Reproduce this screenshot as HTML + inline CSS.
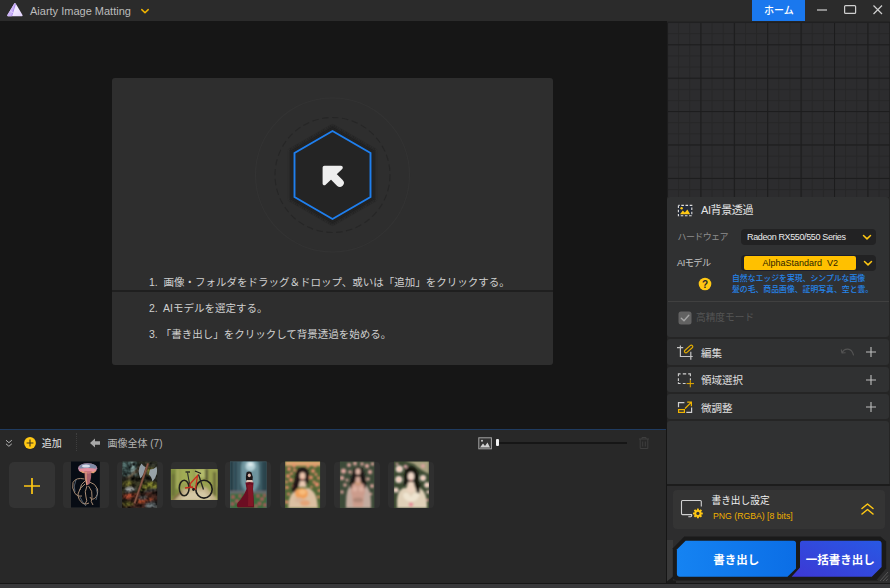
<!DOCTYPE html>
<html lang="ja">
<head>
<meta charset="utf-8">
<title>Aiarty Image Matting</title>
<style>
*{box-sizing:border-box;margin:0;padding:0}
html,body{width:890px;height:588px;overflow:hidden;background:#161616}
body{position:relative;font-family:"Liberation Sans","Noto Sans CJK JP",sans-serif;font-size:11px;color:#d8d8d8;-webkit-font-smoothing:antialiased}
.abs{position:absolute}
.t{position:absolute;white-space:nowrap;line-height:1}
/* title bar */
#titlebar{left:0;top:0;width:890px;height:21px;background:#2b2b2b}
#home{left:752px;top:0;width:53px;height:21px;background:#1a78ee}
/* center */
#drop{left:112px;top:78px;width:441px;height:286.600px;background:#2e2e2e;border-radius:3px}
#dropline{left:112px;top:290px;width:441px;height:2px;background:#1f1f1f}
/* bottom */
#bottom{left:0;top:429.300px;width:666px;height:154.200px;background:#282828;border-top:1.700px solid #1f3b60}
#status{left:0;top:583.500px;width:890px;height:4.500px;background:#38383a}
.thumb{position:absolute;top:461.500px;width:46px;height:46.300px;background:#2f2f2f;border-radius:4px}
/* right */
#right{left:667px;top:21px;width:223px;height:561px;background-color:#252525}
#grid{left:666.600px;top:21.500px;width:223.400px;height:175.500px}
.sec{position:absolute;left:667.300px;width:221.700px;background:#303132;border-radius:3px}
.dd{position:absolute;left:740.500px;width:135.500px;height:16.800px;background:#222223;border-radius:4px}
</style>
</head>
<body>
<!-- TITLE BAR -->
<div id="titlebar" class="abs"></div>
<svg class="abs" style="left:5px;top:0" width="20" height="20" viewBox="5 0 20 20">
  <defs><linearGradient id="lg1" x1="0" y1="0" x2="1" y2="1"><stop offset="0" stop-color="#d9c6fb"/><stop offset=".5" stop-color="#f3ebff"/><stop offset="1" stop-color="#e2d2fd"/></linearGradient></defs>
  <path d="M14.300 3.600 Q15 2.400 15.700 3.600 L22.500 15 Q23 16.200 21.800 16.200 L8.100 16.200 Q6.900 16.200 7.400 15 Z" fill="url(#lg1)"/>
  <path d="M14.300 3.600 Q14.800 2.800 15.200 2.900 L11.200 16.200 L8.100 16.200 Q6.900 16.200 7.400 15 Z" fill="#cbb2f8"/>
  <path d="M15.400 4 L11.600 16.200" stroke="#a884f0" stroke-width="1" fill="none"/>
  <path d="M10 10.500 L13.500 13.500" stroke="#e9dcff" stroke-width=".8" fill="none"/>
</svg>
<div class="t" id="apptitle" style="left:30px;top:5.600px;font-size:11px;color:#bcbcbc">Aiarty Image Matting</div>
<svg class="abs" style="left:140.300px;top:7.600px" width="10" height="7" viewBox="0 0 10 7"><path d="M1.800 1.600 L5 4.700 L8.200 1.600" fill="none" stroke="#f0b400" stroke-width="1.5" stroke-linecap="round" stroke-linejoin="round"/></svg>
<div id="home" class="abs"></div>
<div class="t" id="hometxt" style="left:764px;top:5.500px;font-size:10px;font-weight:500;color:#fff">ホーム</div>
<svg class="abs" style="left:812px;top:0" width="78" height="21" viewBox="0 0 78 21">
  <path d="M5 10 H15" stroke="#cfcfcf" stroke-width="1.2" fill="none"/>
  <rect x="32.6" y="5.6" width="11" height="7.8" rx="1" fill="none" stroke="#cfcfcf" stroke-width="1.2"/>
  <path d="M61.5 5.5 L70 14 M70 5.5 L61.5 14" stroke="#cfcfcf" stroke-width="1.2" fill="none"/>
</svg>

<!-- CENTER DROP PANEL -->
<div id="drop" class="abs"></div>
<div id="dropline" class="abs"></div>
<svg class="abs" style="left:232px;top:75px" width="200" height="200" viewBox="0 0 200 200">
  <defs><filter id="hb" x="-10%" y="-10%" width="120%" height="120%"><feGaussianBlur stdDeviation="1.100"/></filter></defs>
  <circle cx="100.500" cy="100" r="77" fill="none" stroke="#333" stroke-width="1.2"/>
  <circle cx="100.500" cy="100" r="57.500" fill="none" stroke="#262626" stroke-width="1.1" stroke-dasharray="6.500 3.500"/>
  <polygon points="100.500,50.500 143.500,75.300 143.500,124.700 100.500,149.500 57.500,124.700 57.500,75.300" fill="#202020" filter="url(#hb)"/>
  <polygon points="100.500,56 138.500,78 138.500,122 100.500,144 62.500,122 62.500,78" fill="#242424" stroke="#1f7fee" stroke-width="1.900" stroke-linejoin="miter"/>
  <polygon points="92.400,92.600 109,92.600 92.400,108.400" fill="#eeeeee" stroke="#eeeeee" stroke-width="3.600" stroke-linejoin="round"/>
  <path d="M99 99 L107.800 107.800" stroke="#eeeeee" stroke-width="8" stroke-linecap="round" fill="none"/>
</svg>
<div class="t" style="left:149px;top:276.500px;font-size:10.500px;color:#d0d0d0">1.&nbsp; 画像・フォルダをドラッグ＆ドロップ、或いは「追加」をクリックする。</div>
<div class="t" style="left:149px;top:302.500px;font-size:10.500px;color:#d0d0d0">2.&nbsp; AIモデルを選定する。</div>
<div class="t" style="left:149px;top:328.500px;font-size:10.500px;color:#d0d0d0">3. 「書き出し」をクリックして背景透過を始める。</div>

<!-- BOTTOM STRIP -->
<div id="bottom" class="abs"></div>
<div id="status" class="abs"></div>
<svg class="abs" style="left:4px;top:438px" width="10" height="10" viewBox="0 0 10 10"><path d="M2 2.200 L4.900 4.700 L7.800 2.200 M2 5.800 L4.900 8.300 L7.800 5.800" fill="none" stroke="#b4b4b4" stroke-width="1"/></svg>
<svg class="abs" style="left:22.600px;top:436.200px" width="14" height="14" viewBox="0 0 14 14"><circle cx="7" cy="7" r="5.900" fill="#ffc814"/><path d="M7 3.600 V10.400 M3.600 7 H10.400" stroke="#3a3320" stroke-width="1.100"/></svg>
<div class="t" style="left:41.800px;top:439px;font-size:10px;color:#e6e6e6">追加</div>
<div class="abs" style="left:76px;top:433px;width:0;height:18px;border-left:1px dotted #3e3e3e"></div>
<svg class="abs" style="left:89px;top:437px" width="12" height="12" viewBox="0 0 12 12"><path d="M1 6 L6 1.500 L6 4.300 L11 4.300 L11 7.700 L6 7.700 L6 10.500 Z" fill="#a8a8a8"/></svg>
<div class="t" style="left:107.500px;top:439px;font-size:10px;color:#b4b4b4">画像全体 (7)</div>
<svg class="abs" style="left:478px;top:436.500px" width="14" height="13" viewBox="0 0 14 13"><rect x=".8" y=".8" width="12.600" height="11" fill="#333" stroke="#a4a4a4" stroke-width="1"/><path d="M2 10.500 L5 6.500 L7 9 L9.500 5.500 L12 10.500 Z" fill="#d0d0d0"/><circle cx="4" cy="3.800" r="1" fill="#d0d0d0"/></svg>
<div class="abs" style="left:498px;top:442px;width:129px;height:2px;background:#161616"></div>
<div class="abs" style="left:496.400px;top:438.700px;width:2.600px;height:7.600px;background:#f0f0f0;border-radius:1px"></div>
<svg class="abs" style="left:638px;top:436px" width="12" height="14" viewBox="0 0 12 14"><path d="M1 3 H11 M4 3 V1.500 H8 V3 M2.200 3 V12.500 H9.800 V3 M4.700 5.500 V10.500 M7.300 5.500 V10.500" fill="none" stroke="#3e3e3e" stroke-width="1"/></svg>

<div class="abs" style="left:9px;top:462px;width:46px;height:46px;background:#333;border-radius:5px"></div>
<svg class="abs" style="left:23px;top:477px" width="18" height="18" viewBox="0 0 18 18"><path d="M9 1 V17 M1 9 H17" stroke="#ffc814" stroke-width="1.700"/></svg>

<!-- thumb boxes -->
<div class="thumb" style="left:62.5px"></div>
<div class="thumb" style="left:117px"></div>
<div class="thumb" style="left:171px"></div>
<div class="thumb" style="left:225.3px"></div>
<div class="thumb" style="left:279.6px"></div>
<div class="thumb" style="left:334px"></div>
<div class="thumb" style="left:388.3px"></div>
<!-- THUMBS -->
<svg class="abs" style="left:0;top:455px" width="445" height="60" viewBox="0 455 445 60">
<defs>
  <filter id="b3" x="-5%" y="-5%" width="110%" height="110%"><feGaussianBlur stdDeviation="0.45"/></filter>
  <filter id="b6" x="-5%" y="-5%" width="110%" height="110%"><feGaussianBlur stdDeviation="0.95"/></filter>
  <filter id="b12" x="-10%" y="-10%" width="120%" height="120%"><feGaussianBlur stdDeviation="1.3"/></filter>
  <filter id="nz" x="0" y="0" width="100%" height="100%"><feTurbulence type="fractalNoise" baseFrequency="0.22" numOctaves="2" seed="4"/><feColorMatrix values="0 0 0 0 0  0 0 0 0 0  0 0 0 0 0  0 0 0 1.800 -0.620"/></filter>
  <clipPath id="c1"><rect x="71" y="461.400" width="28.800" height="46.200"/></clipPath>
  <clipPath id="c2"><rect x="122" y="461.400" width="35.200" height="46.600"/></clipPath>
  <clipPath id="c3"><rect x="170.900" y="469" width="46.700" height="31"/></clipPath>
  <clipPath id="c4"><rect x="230" y="461.400" width="36.600" height="46.600"/></clipPath>
  <clipPath id="c5"><rect x="285.100" y="461.400" width="35" height="46.600"/></clipPath>
  <clipPath id="c6"><rect x="339.900" y="461.400" width="34.500" height="46.600"/></clipPath>
  <clipPath id="c7"><rect x="393.900" y="461.400" width="35.100" height="46.600"/></clipPath>
  <radialGradient id="fl" cx=".5" cy=".5" r=".5"><stop offset="0" stop-color="#e89050"/><stop offset=".3" stop-color="#f4d0c0"/><stop offset="1" stop-color="#f0e0d8"/></radialGradient>
</defs>

<!-- 1 jellyfish -->
<g clip-path="url(#c1)">
  <rect x="71" y="461" width="29" height="47" fill="#070c14"/>
  <g filter="url(#b3)">
    <ellipse cx="87.600" cy="468.200" rx="9.600" ry="5" fill="#b88aa4"/>
    <ellipse cx="87.800" cy="466.800" rx="8.600" ry="3.300" fill="#7f8aa6"/>
    <ellipse cx="86" cy="466" rx="4" ry="1.600" fill="#d8dcea"/>
    <ellipse cx="87.600" cy="470.300" rx="8.800" ry="2.400" fill="#e58fa0"/>
    <path d="M81 471 Q84 474 86 471.500 Q88.500 474.500 91 471.500 Q93.500 474 95.500 470.500" fill="none" stroke="#e0a070" stroke-width="1.400"/>
    <path d="M84.300 471 L91.500 471 Q91.500 478 89.500 484 L86.300 485.500 Q84.300 478 84.300 471 Z" fill="#c4707c" opacity=".85"/>
    <path d="M86 472 Q85.500 479 87 485" fill="none" stroke="#e0a07c" stroke-width="1.200"/>
    <g fill="none" stroke="#a88c74" stroke-width="1">
      <path d="M84.500 479 Q76 477 73 482.500 Q71.500 488 75 493.500 Q78 497.500 82 496"/>
      <path d="M85 484 Q79 488 78 494 Q78 500 83 503.500 Q86 505 89 503"/>
      <path d="M87 486 Q84 492 86 497 Q88 501 85 504"/>
      <path d="M89.500 482 Q95.500 483.500 97.500 489 Q98.500 495 94.500 498.500 Q91 500.500 90 497"/>
      <path d="M88.500 486 Q93 491 92 497 Q90 502 93 505"/>
      <path d="M86 480 Q80 484 80 490"/>
    </g>
    <g fill="none" stroke="#7a8c9c" stroke-width=".8" opacity=".8">
      <path d="M76 480 Q73 486 75 492"/>
      <path d="M96 488 Q99 494 96 500"/>
      <path d="M80 497 Q82 502 86 506"/>
    </g>
  </g>
</g>

<!-- 2 axe in forest -->
<g clip-path="url(#c2)">
  <rect x="122" y="461" width="36" height="48" fill="#2c2c26"/>
  <g filter="url(#b6)">
    <rect x="122" y="461" width="16" height="15" fill="#5c7a78"/>
    <rect x="126" y="461" width="2.500" height="14" fill="#2a3a38"/>
    <rect x="131.500" y="461" width="2" height="12" fill="#9ab4b0"/>
    <rect x="136" y="461" width="4" height="16" fill="#2a302c"/>
    <path d="M126 478 L140 466 L141.500 468 L128 480 Z" fill="#6a5840"/>
    <rect x="140" y="461" width="18" height="6" fill="#3a3c30"/>
    <path d="M122 481 L136 476 L158 484 L158 492 L122 494 Z" fill="#3a3a26"/>
    <path d="M123 483 Q128 479 134 483 Q130 487 123 486 Z" fill="#7a7830"/>
    <path d="M140 487 Q148 480 157 483 L157 488 Q148 487 142 491 Z" fill="#8a8c30"/>
    <path d="M146 466 Q152 470 157 468 L157 474 Q151 473 148 476 Z" fill="#7c7a30"/>
    <path d="M143 491 Q150 486 157 489 L157 498 Q149 499 143 496 Z" fill="#3c3e3c"/>
    <path d="M122 494 L158 491 L158 508 L122 508 Z" fill="#4a2c20"/>
    <path d="M124 495 Q130 492 137 495 Q131 499 124 498 Z" fill="#b04c30"/>
    <path d="M138 500 Q146 496 154 500 Q146 504 138 503 Z" fill="#a8482c"/>
    <path d="M123 503 Q129 500 134 504 Q128 507 123 506 Z" fill="#6c6a2c"/>
    <path d="M146 503 Q152 500 157.500 503 L157.500 508 L146 508 Z" fill="#6c7478"/>
    <path d="M126 488 Q131 486 136 489 Q131 493 126 492 Z" fill="#a0a4a4"/>
    <path d="M140 497 Q144 495 148 498 Q144 500 140 499 Z" fill="#7c8484"/>
    <path d="M122 499 Q126 498 128 501 L122 503 Z" fill="#20201c"/>
  </g>
</g>

<rect x="122" y="461.400" width="35.200" height="46.600" filter="url(#nz)" clip-path="url(#c2)"/>
<g clip-path="url(#c2)"><g filter="url(#b3)">
    <path d="M141.500 463.500 Q136.500 470 140.500 478.500 Q142.500 474.500 146 473 L147.200 468 Q143.500 467 141.500 463.500 Z" fill="#929ca4"/>
    <path d="M156.500 466.500 Q159 474 152.500 481.500 Q151.500 476.500 148.800 474.500 L150 469.500 Q154 469.500 156.500 466.500 Z" fill="#98a2a8"/>
    <path d="M147 463 L149.200 463.800 L135.500 504 L133.300 503.200 Z" fill="#6a4034"/>
    <path d="M147.600 463.200 L148.500 463.500 L135 503 L134.200 502.700 Z" fill="#8c5c48"/>
</g></g>
<!-- 3 bike -->
<g clip-path="url(#c3)">
  <rect x="170" y="469" width="48" height="32" fill="#98a050"/>
  <g filter="url(#b6)">
    <rect x="170" y="469" width="9" height="31" fill="#7c8a3c"/>
    <rect x="176" y="469" width="3" height="20" fill="#a4ac5c"/>
    <rect x="181" y="469" width="12" height="14" fill="#a0ac54"/>
    <rect x="196" y="469" width="10" height="9" fill="#b4bc6c"/>
    <rect x="205" y="469" width="3" height="12" fill="#5c5c34"/>
    <rect x="209" y="469" width="9" height="18" fill="#98a050"/>
    <rect x="213" y="472" width="3" height="24" fill="#6a6a3a"/>
    <rect x="172" y="474" width="2.500" height="22" fill="#6a6c38"/>
    <path d="M170.500 500.500 L183 489 L206 487 L218 500.500 Z" fill="#c4b48c"/>
    <path d="M180 500.500 L188 492 L204 491 L212 500.500 Z" fill="#d4c8a4"/>
    <path d="M170.500 500.500 L181 491 L183 491.500 L174 500.500 Z" fill="#7a6438"/>
  </g>
  <g filter="url(#b3)" fill="none">
    <ellipse cx="184.200" cy="488" rx="4.900" ry="7.800" stroke="#20201c" stroke-width="1.500"/>
    <ellipse cx="204" cy="489.200" rx="8.200" ry="8.900" stroke="#1c1c1a" stroke-width="1.600"/>
    <path d="M187.500 472.500 L190 486.500" stroke="#2a2c2c" stroke-width="1.100"/>
    <path d="M185.500 472 H190" stroke="#1c1c1c" stroke-width="1.300"/>
    <path d="M190 484 L197.500 475.500 L195.500 489 L190.500 487 Z" stroke="#cc3020" stroke-width="1.300"/>
    <path d="M185 488 L193 487" stroke="#c02c1c" stroke-width="1.400"/>
    <path d="M198.500 474.500 L203.500 489.500" stroke="#242424" stroke-width="1.300"/>
    <path d="M195 471 L201 473.500" stroke="#1c1c1c" stroke-width="1.200"/>
    <circle cx="193.500" cy="489.500" r="1.400" fill="#1c1c1c"/>
  </g>
</g>

<!-- 4 red dress forest -->
<g clip-path="url(#c4)">
  <rect x="230" y="461" width="37" height="48" fill="#46666f"/>
  <g filter="url(#b6)">
    <ellipse cx="250" cy="474" rx="10" ry="19" fill="#6e949e"/>
    <ellipse cx="250.500" cy="466" rx="5" ry="5" fill="#b4d0d6"/>
    <ellipse cx="250.500" cy="464.500" rx="2.500" ry="1.800" fill="#e4f0f2"/>
    <rect x="230" y="461" width="3" height="32" fill="#243840"/>
    <rect x="234.500" y="461" width="2.500" height="32" fill="#2c444e"/>
    <rect x="239" y="461" width="2" height="31" fill="#385660"/>
    <rect x="259" y="461" width="2" height="31" fill="#3a5862"/>
    <rect x="262" y="461" width="2.500" height="32" fill="#28404a"/>
    <rect x="265" y="461" width="2" height="32" fill="#24383f"/>
    <rect x="230" y="491" width="37" height="18" fill="#3c6a3c"/>
    <rect x="230" y="491" width="37" height="2.500" fill="#6c6c70"/>
    <g fill="#c85468">
      <circle cx="233" cy="497" r="1.500"/><circle cx="237" cy="501" r="1.600"/><circle cx="232.500" cy="504" r="1.400"/><circle cx="240" cy="496" r="1.200"/>
      <circle cx="258" cy="496" r="1.300"/><circle cx="262" cy="499" r="1.500"/><circle cx="259.500" cy="503.500" r="1.500"/><circle cx="265" cy="505" r="1.400"/><circle cx="264.500" cy="495.500" r="1.200"/><circle cx="256" cy="506" r="1.200"/>
    </g>
  </g>
  <g filter="url(#b3)">
    <path d="M246.500 472.500 Q249 470.500 251.500 472.500 Q253.500 477 252.500 481 L246 481 Q245.500 476 246.500 472.500 Z" fill="#1a1418"/>
    <ellipse cx="249.300" cy="475.300" rx="1.500" ry="1.900" fill="#d8b4a4"/>
    <path d="M246.500 480 L252.500 480 L253 483 L246 483 Z" fill="#dcc0b0"/>
    <path d="M245.500 482.500 Q249.500 481.500 253.500 482.500 L253 489 Q254 498 254 507.500 L238 507.500 Q236 506 237.500 503 Q244 496 246.500 489 Z" fill="#6c1020"/>
    <path d="M247.500 485 Q250 484 252.500 485 L252.500 490 Q253 498 253 506 L248 506 Q249 496 247.500 485 Z" fill="#821828"/>
  </g>
</g>

<!-- 5 orange roses -->
<g clip-path="url(#c5)">
  <rect x="285" y="461" width="36" height="48" fill="#4e6634"/>
  <g filter="url(#b6)">
    <rect x="285" y="461" width="36" height="5" fill="#dca470"/>
    <g fill="#e88c6c">
      <circle cx="289" cy="469" r="2"/><circle cx="294" cy="466" r="1.800"/><circle cx="288" cy="476" r="2"/><circle cx="291" cy="480" r="2"/><circle cx="287" cy="487.500" r="1.800"/><circle cx="294.500" cy="470" r="1.600"/>
      <circle cx="313" cy="471" r="2"/><circle cx="311" cy="477.500" r="2"/><circle cx="317" cy="484.500" r="2.200"/><circle cx="318.500" cy="478" r="1.500"/><circle cx="315" cy="466" r="1.600"/><circle cx="308" cy="466.500" r="1.500"/><circle cx="286.500" cy="502" r="1.800"/><circle cx="318.500" cy="497" r="1.400"/><circle cx="291.500" cy="473.500" r="1.500"/><circle cx="286.500" cy="482" r="1.400"/><circle cx="293" cy="486" r="1.300"/><circle cx="316" cy="474.500" r="1.400"/><circle cx="314" cy="482" r="1.500"/><circle cx="319" cy="490.500" r="1.500"/><circle cx="311.500" cy="487" r="1.200"/><circle cx="288.500" cy="494" r="1.500"/>
    </g>
    <path d="M289 500 Q291 492 297 489 L309 488 Q315 491 317 500 L318 508 L288 508 Z" fill="#dcc0a2"/>
    <path d="M296.500 471 Q301 464.500 307 469 Q310 474 308.500 481 L306 486 L298 487 Q296 492 292.500 493 Q291 487 294.500 481 Q295.500 476 296.500 471 Z" fill="#241614"/>
    <ellipse cx="302.500" cy="476" rx="2.900" ry="3.800" fill="#ecc4ac"/>
    <path d="M300 481 L305 481 L306.500 487 L298.500 487 Z" fill="#e8c8b0"/>
    <circle cx="302.200" cy="479.200" r=".7" fill="#c03028"/>
    <ellipse cx="301.500" cy="493.500" rx="6.500" ry="5.500" fill="#f0a058"/>
    <ellipse cx="302.500" cy="492" rx="3.500" ry="2.800" fill="#f8bc7c"/>
    <ellipse cx="299" cy="500" rx="4" ry="2.500" fill="#d8b498"/>
    <ellipse cx="305" cy="503" rx="5" ry="3" fill="#e4a478"/>
  </g>
</g>

<!-- 6 pink roses woman -->
<g clip-path="url(#c6)">
  <rect x="339" y="461" width="36" height="48" fill="#3c4a38"/>
  <g filter="url(#b6)">
    <g fill="#dca49c">
      <circle cx="343.500" cy="471" r="2.600"/><circle cx="342" cy="478" r="2.200"/><circle cx="349" cy="465" r="2"/><circle cx="350" cy="472" r="1.800"/><circle cx="345" cy="485" r="1.800"/><circle cx="342" cy="492" r="1.700"/><circle cx="347" cy="480" r="1.500"/><circle cx="355" cy="463.500" r="2"/>
      <circle cx="367" cy="466" r="2.200"/><circle cx="370" cy="472" r="2.200"/><circle cx="368" cy="479" r="1.800"/><circle cx="372" cy="486" r="2"/><circle cx="362" cy="464" r="1.800"/><circle cx="372.500" cy="464" r="1.800"/><circle cx="371" cy="494" r="1.300"/>
    </g>
    <path d="M346 503 Q346 488 352 483 L364 483 Q371 488 371 503 L371 508 L346 508 Z" fill="#c4aca0"/>
    <path d="M353.500 470 Q357.500 464.500 362.500 469 Q365 475 366 482 Q367 487 364.500 489 L362 484 L354 484 L351.500 489.500 Q349 486 350.500 481 Q352 475 353.500 470 Z" fill="#1e1614"/>
    <ellipse cx="358" cy="471.500" rx="2.500" ry="3.300" fill="#dcb4a4"/>
    <path d="M352.500 484 Q358 481 363.500 484 Q366 490 364 496 L363 507 L353 507 L352 496 Q350 490 352.500 484 Z" fill="#cc9c8c"/>
    <path d="M356 477 L360 477 L361 483 L355 483 Z" fill="#d4a898"/>
    <path d="M355.500 482 Q358 487 360.500 482" fill="none" stroke="#c89048" stroke-width=".9"/>
    <ellipse cx="354.800" cy="489" rx="2.400" ry="2.600" fill="#dcb0a0"/>
    <ellipse cx="361.200" cy="489" rx="2.400" ry="2.600" fill="#dcb0a0"/>
    <ellipse cx="358" cy="500" rx="5" ry="2.500" fill="#b08878"/>
  </g>
</g>

<!-- 7 white flowers woman -->
<g clip-path="url(#c7)">
  <rect x="393" y="461" width="37" height="48" fill="#3a4830"/>
  <g filter="url(#b6)">
    <path d="M405 461 L429 461 L429 474 Q420 470 414 464 Z" fill="#a8a080"/>
    <circle cx="399.300" cy="469" r="3.600" fill="url(#fl)"/>
    <circle cx="398.800" cy="479.500" r="3.500" fill="url(#fl)"/>
    <circle cx="396" cy="490" r="2.600" fill="url(#fl)"/>
    <circle cx="423" cy="478" r="3" fill="url(#fl)"/>
    <circle cx="427" cy="485" r="2.800" fill="url(#fl)"/>
    <circle cx="405.500" cy="466.500" r="1.800" fill="#e8a8b0"/>
    <circle cx="423" cy="466" r="1.800" fill="#e4a4a4"/>
    <circle cx="397" cy="464" r="1.300" fill="#e8b0b0"/>
    <circle cx="428" cy="492" r="1.800" fill="#e8c8c0"/>
    <circle cx="427.500" cy="500" r="1.300" fill="#d88890"/>
    <path d="M397 506 Q396 492 403 488 L420 488 Q427 492 427 506 L427 508 L397 508 Z" fill="#e0d0b8"/>
    <path d="M405.500 470 Q410 463.500 416 468 Q419 474 418.500 481 Q421 486 419.500 492 Q418 496 419 498 Q416 496 416.500 491 Q415 487 414 485 L407 485 Q404.500 486 404 484 Q404 477 405.500 470 Z" fill="#16120f"/>
    <ellipse cx="411" cy="476.500" rx="3.100" ry="4.200" fill="#f0d8c8"/>
    <path d="M408.500 482 L413.500 482 L415.500 489 Q411 497 406 489 Z" fill="#ecd4c0"/>
    <circle cx="410.800" cy="480.300" r=".7" fill="#c03038"/>
    <path d="M403 494 Q407 490 411 497 Q415 490 419.500 494 Q420 500 411 502 Q402.500 500 403 494 Z" fill="#efe4d0"/>
    <circle cx="411" cy="504.500" r="2.200" fill="#e48c98"/>
  </g>
</g>
</svg>

<!-- RIGHT PANEL -->
<div id="right" class="abs"></div>
<svg id="grid" class="abs" width="223.400" height="175.500" viewBox="0 0 223.400 175.500">
  <defs>
    <pattern id="pw" width="11.133" height="11.133" patternUnits="userSpaceOnUse"><rect width="11.133" height="11.133" fill="#2c2c2e"/><path d="M.5 0 V11.133 M0 .5 H11.133" stroke="#262627" stroke-width="1.100" fill="none"/></pattern>
    <pattern id="ps" width="33.400" height="33.400" patternUnits="userSpaceOnUse" patternTransform="translate(0 22.300)"><path d="M.5 0 V33.400 M0 .5 H33.400" stroke="#1c1c1d" stroke-width="1.100" fill="none"/></pattern>
  </defs>
  <rect width="223.400" height="175.500" fill="url(#pw)"/>
  <rect width="223.400" height="175.500" fill="url(#ps)"/>
  <path d="M0 .5 H223.400" stroke="#202021" stroke-width="1.200"/>
  <path d="M222.900 0 V175.500" stroke="#1c1c1c" stroke-width="1"/>
</svg>

<div class="sec" style="top:197px;height:140px"></div>
<div class="sec" style="top:339.200px;height:25.400px"></div>
<div class="sec" style="top:366.600px;height:25.500px"></div>
<div class="sec" style="top:394.200px;height:25.200px"></div>
<div class="sec" style="top:421.400px;height:62.600px;border-radius:3px 3px 0 0"></div>
<div class="abs" style="left:667px;top:484px;width:223px;height:1.500px;background:#1c1c1c"></div>
<div class="abs" style="left:667px;top:485.500px;width:223px;height:97.500px;background:#2d2d2e"></div>

<!-- AI section content -->
<svg class="abs" style="left:677px;top:204px" width="16" height="13" viewBox="0 0 16 13">
  <rect x="1.400" y="1.400" width="13.400" height="10.400" fill="#232b3a" stroke="#e0e0e0" stroke-width="1.100" stroke-dasharray="2.600 1.600" stroke-dashoffset="1.300"/>
  <path d="M3 10.300 L5.800 6.600 L7.800 8.400 L10.400 5.600 L13.200 10.300 Z" fill="#ffc814"/><circle cx="4.600" cy="4.200" r="1.200" fill="#ffc814"/>
</svg>
<div class="t" style="left:701px;top:205.400px;font-size:11px;letter-spacing:-0.400px;color:#e4e4e4">AI背景透過</div>
<div class="t" style="left:677.500px;top:232.600px;font-size:9px;letter-spacing:-0.600px;color:#8e8e8e">ハードウェア</div>
<div class="dd" style="top:228.500px"></div>
<div class="t" style="left:747px;top:232.700px;font-size:9px;letter-spacing:-0.370px;color:#ececec">Radeon RX550/550 Series</div>
<svg class="abs" style="left:862.100px;top:233.900px" width="10" height="7" viewBox="0 0 10 7"><path d="M1.500 1.500 L5 4.900 L8.500 1.500" fill="none" stroke="#ffc814" stroke-width="1.500" stroke-linecap="round" stroke-linejoin="round"/></svg>
<div class="t" style="left:677px;top:259.400px;font-size:9.200px;letter-spacing:-0.500px;color:#c6c6c6">AIモデル</div>
<div class="dd" style="top:254.500px"></div>
<div class="abs" style="left:743.800px;top:256.200px;width:112.700px;height:13.500px;background:#ffc000;border-radius:2px;box-shadow:0 0 0 1px #1b1e2c"></div>
<div class="t" style="left:744px;top:258.600px;width:112.500px;text-align:center;font-size:9px;color:#2a2200;white-space:pre">AlphaStandard  V2</div>
<svg class="abs" style="left:863px;top:260.200px" width="10" height="7" viewBox="0 0 10 7"><path d="M1.500 1.500 L5 4.900 L8.500 1.500" fill="none" stroke="#ffc814" stroke-width="1.500" stroke-linecap="round" stroke-linejoin="round"/></svg>
<svg class="abs" style="left:697.800px;top:276.900px" width="14" height="14" viewBox="0 0 14 14"><circle cx="7" cy="7" r="6.300" fill="#ffc814"/><text x="7" y="10.600" text-anchor="middle" font-family="Liberation Sans, sans-serif" font-weight="700" font-size="10" fill="#2a2a2a">?</text></svg>
<div class="t" style="left:732px;top:275.400px;font-size:7.850px;font-weight:500;color:#2584ea">自然なエッジを実現、シンプルな画像</div>
<div class="t" style="left:732px;top:286.100px;font-size:7.850px;font-weight:500;color:#2584ea">髪の毛、商品画像、証明写真、空と雲。</div>
<div class="abs" style="left:668px;top:300.500px;width:221px;height:1px;background:#404040"></div>
<svg class="abs" style="left:678px;top:311px" width="14" height="14" viewBox="0 0 14 14"><rect x=".5" y=".5" width="13" height="13" rx="2.500" fill="#626262"/><path d="M3.300 7.200 L6 9.800 L10.800 4.300" fill="none" stroke="#a4a4a4" stroke-width="1.400" stroke-linecap="round" stroke-linejoin="round"/></svg>
<div class="t" style="left:696px;top:313.300px;font-size:9.700px;color:#555">高精度モード</div>

<!-- tool rows -->
<svg class="abs" style="left:676px;top:344px" width="18" height="17" viewBox="0 0 18 17">
  <path d="M4.400 1.400 V12.500 H16.700 M1 3.600 H7.200 M14.800 7.800 V15.800" fill="none" stroke="#c4c4c4" stroke-width="1.200"/>
  <rect x="7.600" y="3.500" width="10" height="3" rx="1.500" transform="rotate(-42 12.600 5)" fill="none" stroke="#e8b000" stroke-width="1.100"/>
</svg>
<div class="t" style="left:701px;top:347.800px;font-size:10.500px;color:#e0e0e0">編集</div>
<svg class="abs" style="left:840px;top:346px" width="15" height="12" viewBox="0 0 15 12"><path d="M2 6.800 C4.500 1.800 11.500 1.300 13.500 9 M1.300 3.800 L1.900 7 L5.200 6.800" fill="none" stroke="#535353" stroke-width="1.100" stroke-linecap="round" stroke-linejoin="round"/></svg>
<svg class="abs" style="left:865px;top:346.300px" width="12" height="12" viewBox="0 0 12 12"><path d="M6 1 V11 M1 6 H11" stroke="#bebebe" stroke-width="1.100"/></svg>

<svg class="abs" style="left:677px;top:372px" width="18" height="17" viewBox="0 0 18 17">
  <path d="M3.600 1.900 H1.400 V4.300 M5.800 1.900 H9.200 M11.200 1.900 H13.400 V4.300 M1.400 6.300 V9 M13.400 6.300 V8 M1.400 10.300 V11.500 H3.600 M5.800 11.500 H8.600" fill="none" stroke="#d0d0d0" stroke-width="1.100"/>
  <path d="M13.300 8 V15.300 M9.600 11.600 H17" stroke="#e4aa00" stroke-width="1"/>
</svg>
<div class="t" style="left:701px;top:375px;font-size:10.500px;color:#e0e0e0">領域選択</div>
<svg class="abs" style="left:865px;top:373.600px" width="12" height="12" viewBox="0 0 12 12"><path d="M6 1 V11 M1 6 H11" stroke="#bebebe" stroke-width="1.100"/></svg>

<svg class="abs" style="left:677px;top:400px" width="17" height="15" viewBox="0 0 17 15">
  <path d="M7.400 2.600 H1.500 V7.200 M14.600 7.600 V12.300 H9.300" fill="none" stroke="#d0d0d0" stroke-width="1.200"/>
  <rect x="1.600" y="9.600" width="5.800" height="2.800" fill="none" stroke="#f0b400" stroke-width="1.200"/>
  <path d="M8 8.500 L14.200 2.300 M10.200 2.100 H14.400 V6.300" fill="none" stroke="#f0b400" stroke-width="1.200"/>
</svg>
<div class="t" style="left:701px;top:402.600px;font-size:10.500px;color:#e0e0e0">微調整</div>
<svg class="abs" style="left:865px;top:401px" width="12" height="12" viewBox="0 0 12 12"><path d="M6 1 V11 M1 6 H11" stroke="#bebebe" stroke-width="1.100"/></svg>

<!-- export settings -->
<div class="abs" style="left:673.400px;top:490.200px;width:211.500px;height:38.400px;background:#343434;border-radius:4px"></div>
<svg class="abs" style="left:680px;top:499px" width="25" height="22" viewBox="0 0 25 22">
  <path d="M12 15.600 H2.500 Q1.500 15.600 1.500 14.600 V2.500 Q1.500 1.500 2.500 1.500 H20.300 Q21.300 1.500 21.300 2.500 V7.600" fill="none" stroke="#d2d2d2" stroke-width="1.100"/>
  <path d="M8.300 17.700 H10.600 Q11.700 17.700 11.700 16.600 V15.600" fill="none" stroke="#d2d2d2" stroke-width="1.100"/>
  <g transform="translate(17.900 14.400)" fill="#ffc814">
    <circle r="3.500"/>
    <g><rect x="-1" y="-4.900" width="2" height="9.800" rx=".4"/><rect x="-1" y="-4.900" width="2" height="9.800" rx=".4" transform="rotate(45)"/><rect x="-1" y="-4.900" width="2" height="9.800" rx=".4" transform="rotate(90)"/><rect x="-1" y="-4.900" width="2" height="9.800" rx=".4" transform="rotate(135)"/></g>
    <circle r="1.600" fill="#333"/>
  </g>
</svg>
<div class="t" style="left:711.500px;top:496.200px;font-size:9.700px;color:#f0f0f0">書き出し設定</div>
<div class="t" style="left:713px;top:512.200px;font-size:8.700px;color:#f0b000">PNG (RGBA) [8 bits]</div>
<svg class="abs" style="left:860px;top:502px" width="15" height="14" viewBox="0 0 15 14"><path d="M2 6.500 L7.500 2 L13 6.500 M2 12 L7.500 7.500 L13 12" fill="none" stroke="#ffc814" stroke-width="1.500" stroke-linecap="round" stroke-linejoin="round"/></svg>

<!-- buttons -->
<svg class="abs" style="left:660px;top:530px" width="230" height="58" viewBox="660 530 230 58">
  <defs>
    <linearGradient id="gb" x1="0" y1="0" x2="1" y2="0"><stop offset="0" stop-color="#1583f2"/><stop offset="1" stop-color="#0b6ee6"/></linearGradient>
    <linearGradient id="gp" x1="0" y1="1" x2="1" y2="0"><stop offset="0" stop-color="#3d38d4"/><stop offset="1" stop-color="#2858e4"/></linearGradient>
  </defs>
  <path d="M667 540 L673 540 L673 578 L667 581 Z" fill="#393939"/>
  <path d="M667 581.500 L673 576.500 L673 580 L676 580 L676 583 L667 583 Z" fill="#1a1a1a"/>
  <path d="M673 580 H878 V581 H673 Z" fill="#222"/>
  <path d="M684.300 536.400 L880.500 536.400 L886.200 541.500 L886.200 568.400 L876.500 580 L676 580 Q672.800 580 672.800 577 L672.800 548.200 Z" fill="#1a1a1a"/>
  <path d="M685.600 540.800 L793.500 540.800 Q796 540.800 796 543.300 L796 568.400 L787.500 576.800 L680 576.800 Q676.900 576.800 676.900 573.800 L676.900 549.600 Z" fill="url(#gb)"/>
  <path d="M802.500 540.800 L878.600 540.800 Q881.600 540.800 881.600 543.800 L881.600 567 L871.800 576.800 L791.600 576.800 L800 567.500 L800 543.300 Q800 540.800 802.500 540.800 Z" fill="url(#gp)"/>
  <path d="M880 581 L888 572 M883 581 L888 575.500 M886 581 L888 578.800" stroke="#555" stroke-width="1"/>
</svg>
<div class="t" style="left:713.300px;top:554.600px;font-size:11.500px;font-weight:700;color:#fff">書き出し</div>
<div class="t" style="left:805.700px;top:555px;font-size:11.500px;font-weight:700;color:#fff">一括書き出し</div>

</body>
</html>
